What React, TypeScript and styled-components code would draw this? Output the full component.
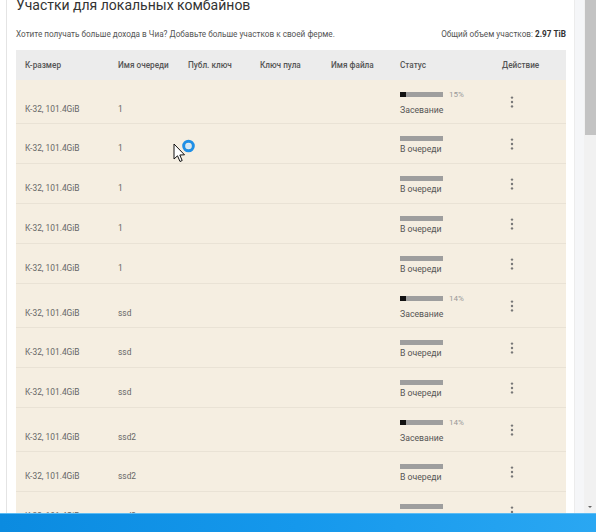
import { FC } from "react";
import styled, { createGlobalStyle } from "styled-components";

type Plot = {
    size: string;
    queue: string;
    state: "seed" | "queue";
    pct?: number;
};

const plots: Plot[] = [
    { size: "К-32, 101.4GiB", queue: "1", state: "seed", pct: 15 },
    { size: "К-32, 101.4GiB", queue: "1", state: "queue" },
    { size: "К-32, 101.4GiB", queue: "1", state: "queue" },
    { size: "К-32, 101.4GiB", queue: "1", state: "queue" },
    { size: "К-32, 101.4GiB", queue: "1", state: "queue" },
    { size: "К-32, 101.4GiB", queue: "ssd", state: "seed", pct: 14 },
    { size: "К-32, 101.4GiB", queue: "ssd", state: "queue" },
    { size: "К-32, 101.4GiB", queue: "ssd", state: "queue" },
    { size: "К-32, 101.4GiB", queue: "ssd2", state: "seed", pct: 14 },
    { size: "К-32, 101.4GiB", queue: "ssd2", state: "queue" },
    { size: "К-32, 101.4GiB", queue: "ssd2", state: "queue" },
];

const GlobalStyle = createGlobalStyle`
    html, body {
        margin: 0;
        padding: 0;
        background: #fff;
        overflow: hidden;
    }
    body {
        font-family: Roboto, "Noto Sans", sans-serif;
    }
`;

const Window = styled.div`
    position: relative;
    width: 596px;
    height: 532px;
    display: flex;
    flex-direction: column;
    overflow: hidden;
`;

const Viewport = styled.div`
    flex: 1;
    display: flex;
    min-height: 0;
`;

const Page = styled.div`
    flex: 1;
    display: flex;
    padding-left: 6px;
    background: #fff;
    min-width: 0;
`;

const Card = styled.div`
    flex: 1;
    border-left: 1px solid #e4e4e4;
    border-right: 1px solid #ececec;
    padding: 0 8px 0 9px;
    background: #fff;
    overflow: hidden;
`;

const Gutter = styled.div`
    width: 9px;
    background: #f5f6f8;
`;

const Scrollbar = styled.div`
    width: 12px;
    background: #f1f1f1;
    display: flex;
    flex-direction: column;
    justify-content: space-between;
    align-items: center;
`;

const Thumb = styled.div`
    width: 11px;
    height: 135px;
    background: #c3c3c3;
`;

const DownArrow = styled.div`
    width: 0;
    height: 0;
    margin-bottom: 5px;
    border-left: 2px solid transparent;
    border-right: 2px solid transparent;
    border-top: 2px solid #666;
`;

const Taskbar = styled.div`
    height: 18px;
    background: linear-gradient(90deg, #0b8be0 0%, #1598ec 50%, #2aa7f2 100%);
    border-top: 1px solid #5cbcf4;
`;

const Title = styled.h1`
    margin: -5px 0 0;
    font-size: 14px;
    line-height: 20px;
    font-weight: 400;
    color: #333;
`;

const SubRow = styled.div`
    margin-top: 13px;
    display: flex;
    justify-content: space-between;
    font-size: 8.2px;
    line-height: 12px;
    color: #555;
    b {
        color: #333;
        font-weight: 700;
    }
`;

const Table = styled.div`
    margin-top: 10px;
`;

const cols = "93px 70px 72px 71px 69px 102px 1fr";

const HeadRow = styled.div`
    display: grid;
    grid-template-columns: ${cols};
    align-items: center;
    height: 30px;
    background: #ececec;
`;

const HeadCell = styled.div`
    padding-left: 9px;
    font-size: 8.2px;
    font-weight: 500;
    color: #555;
`;

const Cell = styled.div`
    align-self: start;
    padding-left: 9px;
    font-size: 8.4px;
    line-height: 12px;
    color: #666;
`;

const Row = styled.div<{ $tall: boolean }>`
    display: grid;
    grid-template-columns: ${cols};
    height: ${(p) => (p.$tall ? 44 : 40)}px;
    box-sizing: border-box;
    background: #f5eee1;
    border-bottom: 1px solid #e9e2d5;
    ${Cell} {
        padding-top: ${(p) => (p.$tall ? 23 : 18)}px;
    }
`;

const StatusCell = styled.div`
    padding: 10px 0 0 9px;
    align-self: start;
`;

const Line = styled.div<{ $pct: boolean }>`
    display: flex;
    align-items: flex-start;
    gap: 6px;
    height: ${(p) => (p.$pct ? 14 : 9)}px;
`;

const Bar = styled.div`
    margin-top: 2px;
    width: 43px;
    height: 5px;
    background: #9e9e9e;
`;

const Fill = styled.div`
    height: 100%;
    background: #111;
`;

const Pct = styled.span`
    font-size: 8px;
    line-height: 9px;
    color: #999;
`;

const Label = styled.div`
    font-size: 8.7px;
    line-height: 12px;
    color: #555;
`;

const ActionCell = styled.div`
    align-self: center;
    padding-left: 9px;
    display: flex;
`;

const Dots = styled.button`
    appearance: none;
    border: 0;
    background: transparent;
    padding: 0;
    width: 20px;
    height: 20px;
    display: flex;
    align-items: center;
    justify-content: center;
    color: #777;
    cursor: pointer;
`;

const Pointer = styled.div`
    position: absolute;
    left: 172px;
    top: 138px;
    pointer-events: none;
`;

const MoreIcon: FC = () => (
    <svg width="4" height="12" viewBox="0 0 4 12">
        <circle cx="2" cy="1.6" r="1.2" fill="currentColor" />
        <circle cx="2" cy="6" r="1.2" fill="currentColor" />
        <circle cx="2" cy="10.4" r="1.2" fill="currentColor" />
    </svg>
);

const BusyCursor: FC = () => (
    <svg width="26" height="28" viewBox="0 0 26 28">
        <path
            d="M2 6 L2 21 L5.5 17.8 L8 23.5 L10.2 22.5 L7.8 17 L12.5 16.8 Z"
            fill="#fff"
            stroke="#111"
            strokeWidth="1"
            strokeLinejoin="round"
        />
        <circle cx="16.5" cy="8" r="4.8" fill="none" stroke="#1f8fe6" strokeWidth="3" />
        <circle cx="16.5" cy="8" r="2.6" fill="#cfe8fb" />
    </svg>
);

const headers = [
    "К-размер",
    "Имя очереди",
    "Публ. ключ",
    "Ключ пула",
    "Имя файла",
    "Статус",
    "Действие",
];

const App: FC = () => {
    return (
        <>
            <GlobalStyle />
            <Window>
                <Viewport>
                    <Page>
                        <Card>
                            <Title>Участки для локальных комбайнов</Title>
                            <SubRow>
                                <span>
                                    Хотите получать больше дохода в Чиа? Добавьте больше участков к своей ферме.
                                </span>
                                <span>
                                    Общий объем участков: <b>2.97 TiB</b>
                                </span>
                            </SubRow>
                            <Table>
                                <HeadRow>
                                    {headers.map((h) => (
                                        <HeadCell key={h}>{h}</HeadCell>
                                    ))}
                                </HeadRow>
                                {plots.map((p, i) => (
                                    <Row key={i} $tall={p.state === "seed"}>
                                        <Cell>{p.size}</Cell>
                                        <Cell>{p.queue}</Cell>
                                        <Cell />
                                        <Cell />
                                        <Cell />
                                        <StatusCell>
                                            <Line $pct={p.pct !== undefined}>
                                                <Bar>
                                                    {p.pct !== undefined && (
                                                        <Fill style={{ width: `${p.pct}%` }} />
                                                    )}
                                                </Bar>
                                                {p.pct !== undefined && <Pct>{p.pct}%</Pct>}
                                            </Line>
                                            <Label>
                                                {p.state === "seed" ? "Засевание" : "В очереди"}
                                            </Label>
                                        </StatusCell>
                                        <ActionCell>
                                            <Dots type="button">
                                                <MoreIcon />
                                            </Dots>
                                        </ActionCell>
                                    </Row>
                                ))}
                            </Table>
                        </Card>
                    </Page>
                    <Gutter />
                    <Scrollbar>
                        <Thumb />
                        <DownArrow />
                    </Scrollbar>
                </Viewport>
                <Taskbar />
                <Pointer>
                    <BusyCursor />
                </Pointer>
            </Window>
        </>
    );
};

export default App;
